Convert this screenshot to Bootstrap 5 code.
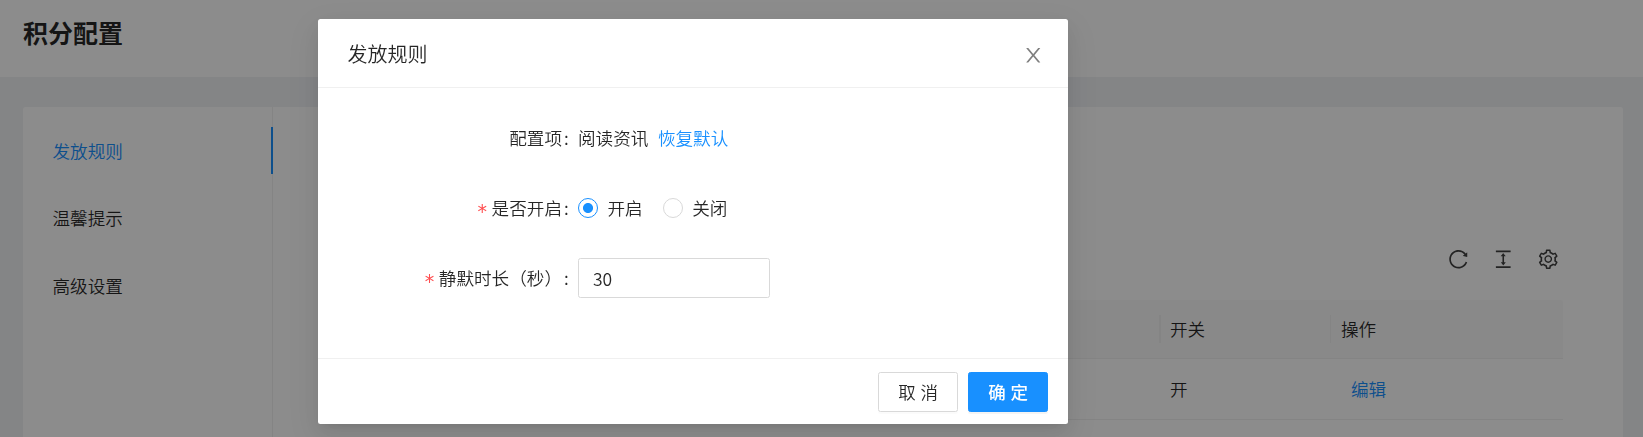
<!DOCTYPE html>
<html lang="zh-CN">
<head>
<meta charset="utf-8">
<meta name="viewport" content="width=device-width, initial-scale=1">
<title>积分配置</title>
<link href="https://cdn.jsdelivr.net/npm/bootstrap@5.3.0/dist/css/bootstrap.min.css" rel="stylesheet">
<style>
  :root { --brand: #1890ff; --line: #f0f0f0; --ink: rgba(0,0,0,.85); }
  body { font-family: "Noto Sans CJK SC", sans-serif; font-size: 17.6px; font-weight: 350; line-height: 27.5px; color: var(--ink); background: #f0f2f5; }
  a { color: var(--brand); text-decoration: none; }
  .page-head { height: 77px; padding: 17px 23px; }
  .page-title { font-size: 25px; font-weight: 700; line-height: 30px; margin: 0; }
  .panel { margin: 30px 20px 0 23px; height: 330px; border-radius: 2.5px 2.5px 0 0; }
  .side { width: 250px; padding-top: 20px; border-right: 1px solid var(--line); }
  .side .nav-link { height: 47px; margin: 0 -1px 20.3px 0; padding: 0 0 0 29.5px; line-height: 48px; color: var(--ink); border-right: 2px solid transparent; }
  .side .nav-link.active { color: var(--brand); border-right-color: var(--brand); }
  .content { padding: 0 60px; }
  .tools { height: 193px; gap: 22.5px; padding: 0 4px 30px 0; color: rgba(0,0,0,.75); }
  .ico { width: 22.5px; height: 22.5px; fill: currentColor; display: block; }
  .grid-head { height: 59px; background: #fafafa; border-bottom: 1px solid var(--line); border-radius: 2.5px 2.5px 0 0; }
  .grid-row { height: 61px; border-bottom: 1px solid var(--line); }
  .c-switch { width: 171px; padding-left: 11px; }
  .c-action { width: 233px; padding-left: 10px; }
  .grid-head .cell { border-left: 1px solid var(--line); height: 28px; line-height: 28px; }
  .grid-head .c-switch { border-left-width: 2px; padding-left: 9px; }
  .grid-row .c-action { padding-left: 21px; }
  .modal-backdrop { --bs-backdrop-opacity: .45; }
  .modal-dialog { width: 750px; max-width: 750px; margin: 19px 0 0 318px; }
  .modal-content { height: 405px; border: 0; border-radius: 2.5px; color: var(--ink); box-shadow: 0 4px 8px -5px rgba(0,0,0,.12), 0 8px 20px rgba(0,0,0,.08), 0 11px 35px 10px rgba(0,0,0,.05); }
  .modal-header { height: 69px; padding: 2px 24px 0 29.5px; border-bottom: 1px solid var(--line); }
  .modal-title { font-size: 20px; font-weight: 350; line-height: 28px; }
  .close-btn { border: 0; background: none; padding: 2px 0 0; color: #7f7f7f; }
  .modal-body { padding: 30px 0 0; }
  .form-line { height: 40px; margin-bottom: 30px; }
  .form-tag { width: 260px; height: 27.5px; white-space: nowrap; }
  .colon { width: 16px; padding-left: 2px; }
  .star { color: #ff4d4f; width: 14px; line-height: 35px; font-size: 19px; font-family: "DejaVu Sans", sans-serif; font-weight: 400; }
  .reset-link { margin-left: 9.5px; }
  .form-check-input { width: 20px; height: 20px; margin: 0; border: 1px solid #d9d9d9; }
  .form-check-input:checked { background: radial-gradient(circle, var(--brand) 4.6px, #fff 5.4px); border-color: var(--brand); }
  .opt { gap: 9.5px; margin-right: 20px; }
  .form-control { width: 192px; height: 40px; padding: 0 14px; border: 1px solid #d9d9d9; border-radius: 2.5px; font-size: 17.5px; font-weight: 350; color: var(--ink); }
  .modal-footer { height: 66px; padding: 0 20px 0; gap: 10px; border-top: 1px solid var(--line); }
  .modal-footer > * { margin: 0; }
  .btn { width: 80px; height: 40px; padding: 0 0 0 5px; font-size: 17.5px; font-weight: 350; letter-spacing: 4.8px; line-height: 38px; border-radius: 2.5px; white-space: nowrap; }
  .btn-cancel { border: 1px solid #d9d9d9; background: #fff; color: var(--ink); box-shadow: 0 2px 0 rgba(0,0,0,.016); }
  .btn-primary { --bs-btn-bg: #1890ff; --bs-btn-border-color: #1890ff; font-weight: 500; box-shadow: 0 2px 0 rgba(0,0,0,.045); }
</style>
</head>
<body class="overflow-hidden">
<header class="page-head bg-white"><h1 class="page-title">积分配置</h1></header>
<main class="panel bg-white d-flex">
  <nav class="side nav flex-column flex-nowrap flex-shrink-0">
    <a class="nav-link active" href="#">发放规则</a>
    <a class="nav-link" href="#">温馨提示</a>
    <a class="nav-link" href="#">高级设置</a>
  </nav>
  <section class="content flex-grow-1">
    <div class="tools d-flex justify-content-end align-items-end">
      <svg class="ico" viewBox="0 0 1024 1024"><path d="M909.1 209.3l-56.4 44.1C775.8 155.1 656.2 92 521.9 92 290 92 102.3 279.5 102 511.5 101.7 743.7 289.8 932 521.9 932c181.3 0 335.8-115 394.6-276.1 1.5-4.2-.7-8.9-4.9-10.3l-56.7-19.5a8 8 0 00-10.1 4.8c-1.8 5-3.8 10-5.9 14.9-17.3 41-42.1 77.8-73.7 109.4A344.77 344.77 0 01655.9 829c-42.3 17.9-87.4 27-133.8 27-46.5 0-91.5-9.1-133.8-27A341.5 341.5 0 01279 755.2a342.16 342.16 0 01-73.7-109.4c-17.9-42.4-27-87.4-27-133.9s9.1-91.5 27-133.9c17.3-41 42.1-77.8 73.7-109.4 31.6-31.6 68.4-56.4 109.3-73.8 42.3-17.9 87.4-27 133.8-27 46.5 0 91.5 9.1 133.8 27a341.5 341.5 0 01109.3 73.8c9.9 9.9 19.2 20.4 27.8 31.4l-60.2 47a8 8 0 003 14.1l175.6 43c5 1.2 9.9-2.6 9.9-7.7l.8-180.9c-.1-6.6-7.8-10.3-13-6.2z"/></svg>
      <svg class="ico" viewBox="0 0 1024 1024"><path d="M840 836H184c-4.4 0-8 3.6-8 8v60c0 4.4 3.6 8 8 8h656c4.4 0 8-3.6 8-8v-60c0-4.4-3.6-8-8-8zm0-724H184c-4.4 0-8 3.6-8 8v60c0 4.4 3.6 8 8 8h656c4.4 0 8-3.6 8-8v-60c0-4.4-3.6-8-8-8zM610.8 378c6 0 9.4-7 5.7-11.7L515.7 238.7a7.14 7.14 0 00-11.3 0L403.6 366.3a7.23 7.23 0 005.7 11.7H476v268h-62.8c-6 0-9.4 7-5.7 11.7l100.8 127.5c2.9 3.7 8.5 3.7 11.3 0l100.8-127.5c3.7-4.7.4-11.7-5.7-11.7H548V378h62.8z"/></svg>
      <svg class="ico" viewBox="0 0 1024 1024"><path d="M924.8 625.7l-65.5-56c3.1-19 4.7-38.4 4.7-57.8s-1.6-38.8-4.7-57.8l65.5-56a32.03 32.03 0 009.3-35.2l-.9-2.6a443.74 443.74 0 00-79.7-137.9l-1.8-2.1a32.12 32.12 0 00-35.1-9.5l-81.3 28.9c-30-24.6-63.5-44-99.7-57.6l-15.7-85a32.05 32.05 0 00-25.8-25.7l-2.7-.5c-52.1-9.4-106.9-9.4-159 0l-2.7.5a32.05 32.05 0 00-25.8 25.7l-15.8 85.4a351.86 351.86 0 00-99 57.4l-81.9-29.1a32 32 0 00-35.1 9.5l-1.8 2.1a446.02 446.02 0 00-79.7 137.9l-.9 2.6c-4.5 12.5-.8 26.5 9.3 35.2l66.3 56.6c-3.1 18.8-4.6 38-4.6 57.1 0 19.2 1.5 38.4 4.6 57.1L99 625.5a32.03 32.03 0 00-9.3 35.2l.9 2.6c18.1 50.4 44.9 96.9 79.7 137.9l1.8 2.1a32.12 32.12 0 0035.1 9.5l81.9-29.1c29.8 24.5 63.1 43.9 99 57.4l15.8 85.4a32.05 32.05 0 0025.8 25.7l2.7.5a449.4 449.4 0 00159 0l2.7-.5a32.05 32.05 0 0025.8-25.7l15.7-85a350 350 0 0099.7-57.6l81.3 28.9a32 32 0 0035.1-9.5l1.8-2.1c34.8-41.1 61.6-87.5 79.7-137.9l.9-2.6c4.5-12.3.8-26.3-9.3-35zM788.3 465.9c2.5 15.1 3.8 30.6 3.8 46.1s-1.3 31-3.8 46.1l-6.6 40.1 74.7 63.9a370.03 370.03 0 01-42.6 73.6L721 702.8l-31.4 25.8c-23.9 19.6-50.5 35-79.3 45.8l-38.1 14.3-17.9 97a377.5 377.5 0 01-85 0l-17.9-97.2-37.8-14.5c-28.5-10.8-55-26.2-78.7-45.7l-31.4-25.9-93.4 33.2c-17-22.9-31.2-47.6-42.6-73.6l75.5-64.5-6.5-40c-2.4-14.9-3.7-30.3-3.7-45.5 0-15.3 1.2-30.6 3.7-45.5l6.5-40-75.5-64.5c11.3-26.1 25.6-50.7 42.6-73.6l93.4 33.2 31.4-25.9c23.7-19.5 50.2-34.9 78.7-45.7l37.9-14.3 17.9-97.2c28.1-3.2 56.8-3.2 85 0l17.9 97 38.1 14.3c28.7 10.8 55.4 26.2 79.3 45.8l31.4 25.8 92.8-32.9c17 22.9 31.2 47.6 42.6 73.6L781.8 426l6.5 39.9zM512 326c-97.2 0-176 78.8-176 176s78.8 176 176 176 176-78.8 176-176-78.8-176-176-176zm79.2 255.2A111.6 111.6 0 01512 614c-29.9 0-58-11.7-79.2-32.8A111.6 111.6 0 01400 502c0-29.9 11.7-58 32.8-79.2C454 401.6 482.1 390 512 390c29.9 0 58 11.6 79.2 32.8A111.6 111.6 0 01624 502c0 29.9-11.7 58-32.8 79.2z"/></svg>
    </div>
    <div class="grid-head d-flex justify-content-end align-items-center">
      <div class="cell c-switch">开关</div><div class="cell c-action">操作</div>
    </div>
    <div class="grid-row d-flex justify-content-end align-items-center">
      <div class="c-switch">开</div><div class="c-action"><a href="#">编辑</a></div>
    </div>
  </section>
</main>

<div class="modal-backdrop show"></div>
<div class="modal d-block overflow-hidden" tabindex="-1" role="dialog">
  <div class="modal-dialog">
    <div class="modal-content">
      <div class="modal-header">
        <h2 class="modal-title">发放规则</h2>
        <button class="close-btn" type="button" aria-label="关闭"><svg class="ico" viewBox="0 0 1024 1024"><path d="M563.8 512l262.5-312.9c4.4-5.2.7-13.1-6.1-13.1h-79.8c-4.7 0-9.2 2.1-12.3 5.7L511.6 449.8 295.1 191.7c-3-3.6-7.5-5.7-12.3-5.7H203c-6.8 0-10.5 7.9-6.1 13.1L459.4 512 196.9 824.9A7.95 7.95 0 00203 838h79.8c4.7 0 9.2-2.1 12.3-5.7l216.5-258.1 216.5 258.1c3 3.6 7.5 5.7 12.3 5.7h79.8c6.8 0 10.5-7.9 6.1-13.1L563.8 512z"/></svg></button>
      </div>
      <div class="modal-body">
        <div class="form-line d-flex align-items-center">
          <div class="form-tag d-flex justify-content-end"><span>配置项</span><span class="colon">:</span></div>
          <span>阅读资讯</span><a class="reset-link" href="#">恢复默认</a>
        </div>
        <div class="form-line d-flex align-items-center">
          <div class="form-tag d-flex justify-content-end"><span class="star">*</span><span>是否开启</span><span class="colon">:</span></div>
          <label class="opt d-flex align-items-center"><input class="form-check-input" type="radio" name="enabled" checked><span>开启</span></label>
          <label class="opt d-flex align-items-center"><input class="form-check-input" type="radio" name="enabled"><span>关闭</span></label>
        </div>
        <div class="form-line d-flex align-items-center">
          <div class="form-tag d-flex justify-content-end"><span class="star">*</span><span>静默时长（秒）</span><span class="colon">:</span></div>
          <input class="form-control" type="text" value="30" aria-label="静默时长">
        </div>
      </div>
      <div class="modal-footer flex-nowrap">
        <button class="btn btn-cancel" type="button">取消</button>
        <button class="btn btn-primary" type="button">确定</button>
      </div>
    </div>
  </div>
</div>
<script src="https://cdn.jsdelivr.net/npm/bootstrap@5.3.0/dist/js/bootstrap.bundle.min.js"></script>
</body>
</html>
